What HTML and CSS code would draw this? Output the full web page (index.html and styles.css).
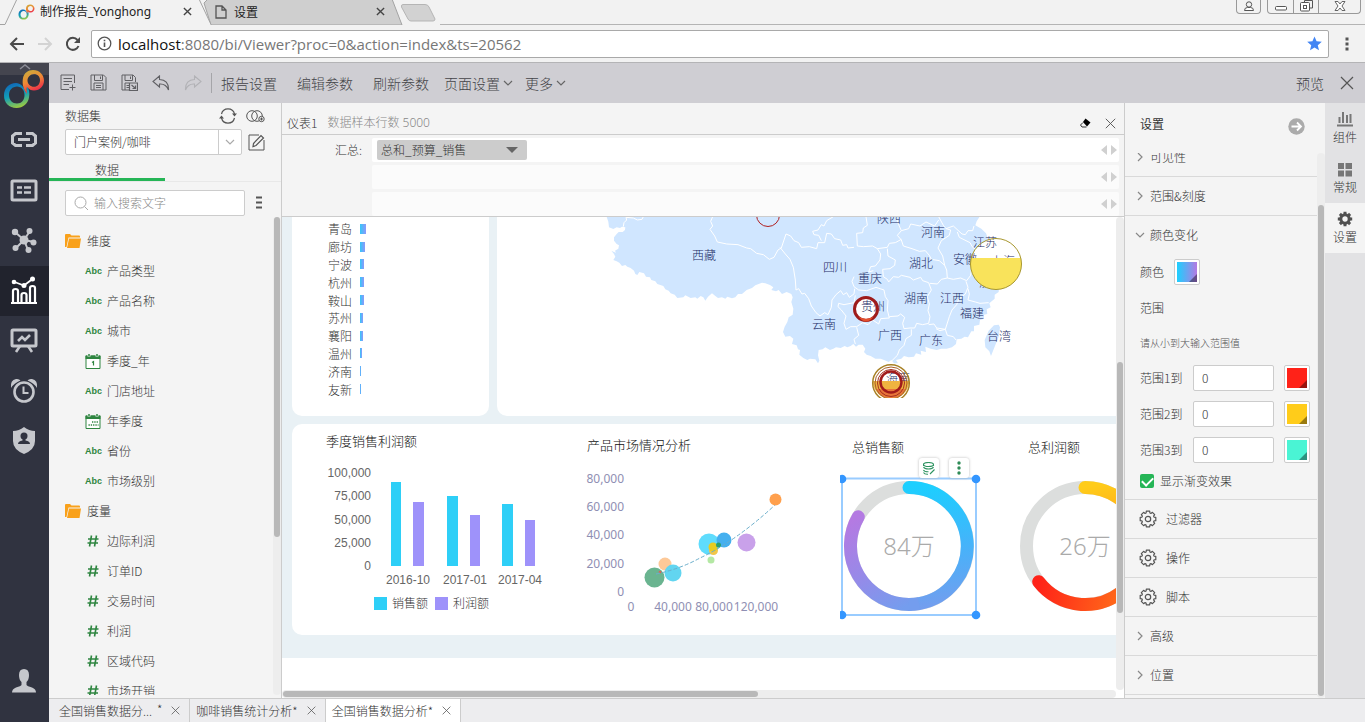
FILE: index.html
```html
<!DOCTYPE html>
<html lang="zh-CN">
<head>
<meta charset="utf-8">
<title>制作报告_Yonghong</title>
<link rel="stylesheet" href="styles.css">
</head>
<body>
<svg class="defs" width="0" height="0" aria-hidden="true">
  <defs>
    <linearGradient id="ring-cool" x1="0.3" y1="0" x2="0.6" y2="1"><stop offset="0" stop-color="#1068b8"/><stop offset="0.5" stop-color="#12a0b8"/><stop offset="1" stop-color="#a3cc3a"/></linearGradient>
    <linearGradient id="ring-warm" x1="0.2" y1="0" x2="0.6" y2="1"><stop offset="0" stop-color="#c9ac3c"/><stop offset="0.45" stop-color="#ef8a35"/><stop offset="1" stop-color="#ea1450"/></linearGradient>
    <symbol id="logo" viewBox="0 0 42 40">
      <path fill="url(#ring-cool)" fill-rule="evenodd" d="M13 14C6 14 1 19 1 26.500S6 39 13.500 39C20 39 25 34.500 26 28.500C27 24 26 19 23 15C24 20 23.500 22 22.500 23C21 17.500 17.500 14 13 14ZM14 17.500C18.500 17.500 21.500 21 21.500 26S18.500 34.500 14 34.500S6 31 6 26S9.500 17.500 14 17.500Z"/>
      <path fill="url(#ring-warm)" fill-rule="evenodd" d="M30 1C25 1 21 4 20 9C19 14 20 20 24 25C23.500 21 23.500 19 24 18C26 20.500 28 21.500 31 21.500C37 21.500 41 17 41 11.500S36.500 1 30 1ZM31 5C34.500 5 37 7.500 37 11.200S34.500 17.800 31 17.800S24.500 15 24.500 11.500S27.500 5 31 5Z"/>
    </symbol>
    <symbol id="cross" viewBox="0 0 14 14"><path d="M1 1L13 13M13 1L1 13" fill="none" stroke="currentColor" stroke-width="1.200"/></symbol>
    <symbol id="cross-bold" viewBox="0 0 10 10"><path d="M1 1L9 9M9 1L1 9" fill="none" stroke="currentColor" stroke-width="1.500"/></symbol>
    <symbol id="chev-down" viewBox="0 0 10 10"><path d="M1 3L5 7L9 3" fill="none" stroke="currentColor" stroke-width="1.200"/></symbol>
    <symbol id="chev-right" viewBox="0 0 10 10"><path d="M3 1L7 5L3 9" fill="none" stroke="currentColor" stroke-width="1.200"/></symbol>
    <symbol id="folder" viewBox="0 0 16 14"><path d="M0 13V1Q0 0 1 0H5L6.500 1.500H14Q15 1.500 15 2.500V3.500H3.500L1.500 13Z" fill="#f9a11b"/><path d="M4 4.500H16L14.500 14H2Z" fill="#f9a11b"/></symbol>
    <symbol id="hash" viewBox="0 0 12 12"><path d="M4.500 0.500L2.500 11.500M9.500 0.500L7.500 11.500M1 4H11.500M0.500 8H11" fill="none" stroke="#2e8540" stroke-width="1.600"/></symbol>
    <symbol id="cal-one" viewBox="0 0 15 15"><path d="M0.500 2H14.500V14.500H0.500Z" fill="#fff" stroke="#2e8540"/><path d="M0 1.500H15V5H0Z" fill="#2e8540"/><path d="M3.500 0V2.500M11.500 0V2.500" stroke="#f4f4f4" stroke-width="3"/><path d="M3.500 0V2M11.500 0V2" stroke="#2e8540" stroke-width="1.500"/><path d="M6.500 8.500L8 7.500V11.500" fill="none" stroke="#2e8540" stroke-width="1.200"/></symbol>
    <symbol id="cal-dots" viewBox="0 0 15 15"><path d="M0.500 2H14.500V14.500H0.500Z" fill="#fff" stroke="#2e8540"/><path d="M0 1.500H15V5H0Z" fill="#2e8540"/><path d="M3.500 0V2.500M11.500 0V2.500" stroke="#f4f4f4" stroke-width="3"/><path d="M3.500 0V2M11.500 0V2" stroke="#2e8540" stroke-width="1.500"/><path d="M6.500 8H13M3 11H13" stroke="#2e8540" stroke-width="1.500" stroke-dasharray="1.300 1"/></symbol>
    <symbol id="gear-line" viewBox="0 0 18 18"><path d="M7.300 1.200L10.700 1.200L10.900 3L11.900 3.400L13.400 2.300L15.700 4.600L14.600 6.100L15 7.100L16.800 7.300L16.800 10.700L15 10.900L14.600 11.900L15.700 13.400L13.400 15.700L11.900 14.600L10.900 15L10.700 16.800L7.300 16.800L7.100 15L6.100 14.600L4.600 15.700L2.300 13.400L3.400 11.900L3 10.900L1.200 10.700L1.200 7.300L3 7.100L3.400 6.100L2.300 4.600L4.600 2.300L6.100 3.400L7.100 3Z" fill="none" stroke="#555" stroke-width="1.200" stroke-linejoin="round"/><circle cx="9" cy="9" r="2.700" fill="none" stroke="#555" stroke-width="1.200"/></symbol>
    <symbol id="shift" viewBox="0 0 16 10"><path d="M6 0V10L0 5ZM10 0V10L16 5Z" fill="#d0d0d0"/></symbol>
  </defs>
</svg>

<header class="browser">
  <div class="tabstrip">
    <svg class="tabshapes" width="440" height="25" aria-hidden="true">
      <path d="M204 3L208 -1H392L402 25H211Z" fill="#cfcfcf" stroke="#a3a3a3"/>
      <path d="M0 24.500H5L17 -1H199L211 24.500" fill="#f2f2f2" stroke="#a3a3a3"/>
      <path d="M403 4.500H425Q428 4.500 429 7L435 19Q435 21 433 21H411Q409 21 408 19L401.500 7Q401 4.500 403 4.500Z" fill="#d2d2d2" stroke="#b5b5b5"/>
    </svg>
    <div class="tablabels">
      <div class="btab btab-first">
        <svg width="17" height="16"><use href="#logo"/></svg><span class="btab-name">制作报告_Yonghong</span>
        <button class="icon-btn" aria-label="关闭标签"><svg width="9" height="9"><use href="#cross-bold"/></svg></button>
      </div>
      <div class="btab">
        <svg width="12" height="14" viewBox="0 0 12 14"><path d="M1 1H7L11 5V13H1ZM7 1V5H11" fill="none" stroke="#555" stroke-width="1.300"/></svg><span class="btab-name">设置</span>
        <button class="icon-btn" aria-label="关闭标签"><svg width="9" height="9"><use href="#cross-bold"/></svg></button>
      </div>
    </div>
    <div class="window-controls">
      <button class="wbtn wbtn-user" aria-label="用户"><svg width="12" height="12" viewBox="0 0 12 12"><circle cx="6" cy="3.500" r="2.700" fill="none" stroke="#555"/><path d="M1.500 9.500Q1.500 6.500 4.500 6.500H7.500Q10.500 6.500 10.500 9.500Z" fill="#fff" stroke="#555"/></svg></button>
      <div class="wgroup">
        <button class="wbtn" aria-label="最小化"><svg width="12" height="12" viewBox="0 0 12 12"><rect x="0.500" y="5.500" width="11" height="3.500" rx="1" fill="#fff" stroke="#555"/></svg></button>
        <button class="wbtn" aria-label="还原"><svg width="13" height="13" viewBox="0 0 13 13"><path d="M4.500 3V0.500H12.500V8H10" fill="none" stroke="#555"/><rect x="0.500" y="2.500" width="9" height="8.500" rx="1" fill="#fff" stroke="#555"/><rect x="3.500" y="5.500" width="3" height="3" fill="none" stroke="#555"/></svg></button>
        <button class="wbtn wbtn-wide" aria-label="关闭"><svg width="12" height="12" viewBox="0 0 12 12"><path d="M1 0.500H4L6 3L8 0.500H11L8 5L11 9.500H8L6 7L4 9.500H1L4 5Z" fill="#fff" stroke="#666"/></svg></button>
      </div>
    </div>
  </div>
  <div class="addressbar">
    <button class="icon-btn" aria-label="后退"><svg width="16" height="16" viewBox="0 0 16 16"><path d="M15 8H2M8 2L2 8L8 14" fill="none" stroke="#4a4a4a" stroke-width="2"/></svg></button>
    <button class="icon-btn" aria-label="前进"><svg width="16" height="16" viewBox="0 0 16 16"><path d="M1 8H14M8 2L14 8L8 14" fill="none" stroke="#d3d3d3" stroke-width="2"/></svg></button>
    <button class="icon-btn" aria-label="刷新"><svg width="16" height="16" viewBox="0 0 16 16"><path d="M13.500 10A6 6 0 1 1 12.500 4" fill="none" stroke="#4a4a4a" stroke-width="2"/><path d="M15 1V7H9Z" fill="#4a4a4a"/></svg></button>
    <div class="urlbox">
      <svg width="15" height="15" viewBox="0 0 15 15"><circle cx="7.500" cy="7.500" r="6.300" fill="none" stroke="#555" stroke-width="1.300"/><path d="M7.500 6.500V11M7.500 3.700V5.200" stroke="#555" stroke-width="1.600"/></svg>
      <span class="url"><span class="host">localhost</span>:8080/bi/Viewer?proc=0&amp;action=index&amp;ts=20562</span>
      <svg width="15" height="15" viewBox="0 0 16 16"><path d="M8 0.500L10.200 5.600L15.800 6.100L11.500 9.800L12.800 15.300L8 12.300L3.200 15.300L4.500 9.800L0.200 6.100L5.800 5.600Z" fill="#4285f4"/></svg>
    </div>
    <button class="icon-btn menu-btn" aria-label="菜单"><svg width="4" height="14" viewBox="0 0 4 14"><path d="M2 0.500V3.500M2 5.500V8.500M2 10.500V13.500" stroke="#555" stroke-width="3"/></svg></button>
  </div>
</header>

<div class="app">
  <nav class="rail" aria-label="主导航">
    <div class="rail-top"><svg width="12" height="7" viewBox="0 0 12 7"><path d="M1 6L6 2L11 6" fill="none" stroke="#8b8c96" stroke-width="1.500"/></svg></div>
    <svg class="brand" width="42" height="40"><use href="#logo"/></svg>
    <button class="rail-item" aria-label="连接"><svg width="28" height="28" viewBox="0 0 28 28"><path d="M12 6.500H5.500L2.500 9V16L5.500 18.500H12M16 6.500H22.500L25.500 9V16L22.500 18.500H16M8 12.500H20" fill="none" stroke="#c5c7cc" stroke-width="3"/></svg></button>
    <button class="rail-item" aria-label="数据集"><svg width="28" height="28" viewBox="0 0 28 28"><rect x="2" y="4" width="24" height="19" rx="1" fill="none" stroke="#c5c7cc" stroke-width="3"/><path d="M7 10.500H12M7 15.500H12M14 10.500H21M14 15.500H21" stroke="#c5c7cc" stroke-width="2.500"/></svg></button>
    <button class="rail-item" aria-label="分析"><svg width="28" height="28" viewBox="0 0 28 28"><path d="M14 13L5 5M14 13L20 4M14 13L24 15M14 13L6 21M14 13L18 23" stroke="#c5c7cc" stroke-width="2"/><circle cx="14" cy="13" r="4.500" fill="#c5c7cc"/><g fill="#c5c7cc"><circle cx="5" cy="5" r="3.200"/><circle cx="19.500" cy="4" r="3"/><circle cx="23.500" cy="15.500" r="3"/><circle cx="5.500" cy="21" r="3"/><circle cx="18.500" cy="23" r="3"/></g></svg></button>
    <button class="rail-item rail-active" aria-label="制作报告"><svg width="28" height="30" viewBox="0 0 28 30"><path d="M1 27H27" stroke="#fff" stroke-width="2"/><path d="M3 27V15Q3 13 5.500 13T8 15V27M11.500 27V19Q11.500 17 14 17T16.500 19V27M20 27V12Q20 10 22.500 10T25 12V27" fill="none" stroke="#fff" stroke-width="2.200"/><path d="M4.500 6L14 9.500L22.500 3" fill="none" stroke="#fff" stroke-width="1.800"/><circle cx="4" cy="6" r="2.300" fill="#fff"/><circle cx="14" cy="9.500" r="2.500" fill="#fff"/><circle cx="22.500" cy="3" r="2.500" fill="#fff"/></svg></button>
    <button class="rail-item" aria-label="查看报告"><svg width="28" height="28" viewBox="0 0 28 28"><rect x="2" y="3" width="24" height="16" rx="1" fill="none" stroke="#c5c7cc" stroke-width="3"/><path d="M8 14L12 10L15 13L20 8M10 19L6 25M18 19L22 25" fill="none" stroke="#c5c7cc" stroke-width="2.600"/></svg></button>
    <button class="rail-item" aria-label="调度"><svg width="28" height="28" viewBox="0 0 28 28"><circle cx="14" cy="15" r="9.500" fill="none" stroke="#c5c7cc" stroke-width="2.600"/><path d="M13.500 9.500V16H18.500" fill="none" stroke="#c5c7cc" stroke-width="2"/><path d="M1 11Q0 3 6 2Q9 1.500 10.500 3.500Q4 6 1 11ZM27 11Q28 3 22 2Q19 1.500 17.500 3.500Q24 6 27 11Z" fill="#c5c7cc"/></svg></button>
    <button class="rail-item" aria-label="管理"><svg width="28" height="28" viewBox="0 0 28 28"><path d="M14 0Q19 4 25 4V14Q25 22.500 14 27Q3 22.500 3 14V4Q9 4 14 0Z" fill="#c5c7cc"/><circle cx="14" cy="9" r="3.500" fill="#303340"/><path d="M12.500 10.500H15.500V13.500Q20 14 20 17H8Q8 14 12.500 13.500Z" fill="#303340"/></svg></button>
    <button class="rail-item rail-user" aria-label="个人"><svg width="26" height="26" viewBox="0 0 26 26"><path d="M13 1Q18 1 18 7Q18 12 15.500 14V17Q16 18 21 19.500Q25 21 25 24.500H1Q1 21 5 19.500Q10 18 10.500 17V14Q8 12 8 7Q8 1 13 1Z" fill="#c5c7cc"/></svg></button>
  </nav>

  <div class="main">
    <div class="toolbar">
      <button class="icon-btn" aria-label="新建"><svg width="16" height="17" viewBox="0 0 16 17"><path d="M14.500 9V1H1V15.500H9M3.500 4.500H12M3.500 7.500H12M3.500 10.500H9M12.500 10.500V16.500M9.500 13.500H15.500" fill="none" stroke="#606064"/></svg></button>
      <button class="icon-btn" aria-label="保存"><svg width="17" height="17" viewBox="0 0 17 17"><path d="M1 1H13.500L16 3.500V16H1ZM4.500 1V6.500H12.500V1M10.500 2.500V5M4 16V9H13V16M6 11.500H11M6 13.500H11" fill="none" stroke="#606064"/></svg></button>
      <button class="icon-btn" aria-label="另存为"><svg width="17" height="17" viewBox="0 0 17 17"><path d="M8 16H1V1H12L14.500 3.500V8M4 1V6.500H11.500V1M9.500 2.500V5M4 16V9H8M5.500 11.500H8M5.500 13.500H8" fill="none" stroke="#606064"/><path d="M8.500 9H16.500V16.500H8.500ZM10.500 11L14 14M14.500 11.500V14.500H11.500" fill="none" stroke="#606064" stroke-width="1.200"/></svg></button>
      <button class="icon-btn" aria-label="撤销"><svg width="18" height="16" viewBox="0 0 18 16"><path d="M7.500 1L1 6.500L7.500 12V9Q14 8.500 16.500 15Q17 5 7.500 4.500Z" fill="none" stroke="#606064" stroke-width="1.100"/></svg></button>
      <button class="icon-btn" aria-label="重做"><svg width="18" height="16" viewBox="0 0 18 16"><path d="M10.500 1L17 6.500L10.500 12V9Q4 8.500 1.500 15Q1 5 10.500 4.500Z" fill="none" stroke="#b2b2b6" stroke-width="1.100"/></svg></button>
      <span class="divider"></span>
      <button class="tool">报告设置</button>
      <button class="tool">编辑参数</button>
      <button class="tool">刷新参数</button>
      <button class="tool tool-menu">页面设置<svg width="10" height="10"><use href="#chev-down"/></svg></button>
      <button class="tool tool-menu">更多<svg width="10" height="10"><use href="#chev-down"/></svg></button>
      <span class="spacer"></span>
      <button class="tool tool-preview">预览</button>
      <button class="icon-btn" aria-label="关闭"><svg width="14" height="14"><use href="#cross"/></svg></button>
    </div>

    <div class="workspace">
      <aside class="dataset">
        <div class="ds-head">
          <label for="ds">数据集</label>
          <button class="icon-btn" aria-label="刷新数据集"><svg width="18" height="16" viewBox="0 0 18 16"><path d="M2.500 6A6.700 6.700 0 0 1 15.500 6M15.500 10A6.700 6.700 0 0 1 2.500 10" fill="none" stroke="#555" stroke-width="1.200"/><path d="M13 5.500H18L15.500 8.500ZM0 10.500H5L2.500 7.500Z" fill="#555"/></svg></button>
          <button class="icon-btn" aria-label="关联数据集"><svg width="19" height="14" viewBox="0 0 19 14"><circle cx="6" cy="7" r="5.300" fill="none" stroke="#555"/><circle cx="11" cy="7" r="5.300" fill="none" stroke="#555"/><circle cx="15.500" cy="10" r="2.700" fill="#f4f4f4" stroke="#555"/><path d="M15.500 8.500V11.500M14 10H17" stroke="#555"/></svg></button>
        </div>
        <div class="ds-pick">
          <div class="combo"><select id="ds"><option>门户案例/咖啡</option></select><svg width="23" height="24" viewBox="0 0 23 24"><path d="M0.500 0V24" stroke="#ccc"/><path d="M8 10L12 14L16 10" fill="none" stroke="#aaa" stroke-width="1.200"/></svg></div>
          <button class="icon-btn" aria-label="编辑"><svg width="17" height="17" viewBox="0 0 17 17"><path d="M16 6V16H1V1H11" fill="none" stroke="#555"/><path d="M5.500 9.500L13 1.500L15.500 4L8 11.500L5 12.500Z" fill="none" stroke="#555" stroke-width="1.200"/></svg></button>
        </div>
        <div class="ds-tabs"><button class="ds-tab">数据</button></div>
        <div class="ds-search">
          <div class="search"><svg width="15" height="15" viewBox="0 0 15 15"><circle cx="6.500" cy="6.500" r="5.500" fill="none" stroke="#aaa"/><path d="M10.500 10.500L14 14" stroke="#aaa"/></svg><input type="text" aria-label="输入搜索文字" placeholder="输入搜索文字"></div>
          <button class="icon-btn" aria-label="更多"><svg width="8" height="14" viewBox="0 0 8 14"><path d="M1 1.500H7M1 6.500H7M1 11.500H7" stroke="#555" stroke-width="2.200"/></svg></button>
        </div>
        <div class="tree-wrap">
          <ul class="tree">
            <li class="group"><svg width="16" height="14"><use href="#folder"/></svg>维度</li>
            <li><span class="abc">Abc</span>产品类型</li>
            <li><span class="abc">Abc</span>产品名称</li>
            <li><span class="abc">Abc</span>城市</li>
            <li><svg width="16" height="15"><use href="#cal-one"/></svg>季度_年</li>
            <li><span class="abc">Abc</span>门店地址</li>
            <li><svg width="16" height="15"><use href="#cal-dots"/></svg>年季度</li>
            <li><span class="abc">Abc</span>省份</li>
            <li><span class="abc">Abc</span>市场级别</li>
            <li class="group"><svg width="16" height="14"><use href="#folder"/></svg>度量</li>
            <li><svg width="16" height="12"><use href="#hash"/></svg>边际利润</li>
            <li><svg width="16" height="12"><use href="#hash"/></svg>订单ID</li>
            <li><svg width="16" height="12"><use href="#hash"/></svg>交易时间</li>
            <li><svg width="16" height="12"><use href="#hash"/></svg>利润</li>
            <li><svg width="16" height="12"><use href="#hash"/></svg>区域代码</li>
            <li><svg width="16" height="12"><use href="#hash"/></svg>市场开销</li>
          </ul>
          <div class="vbar"><div class="thumb thumb-tree"></div></div>
        </div>
      </aside>

      <main class="editor">
        <div class="ed-head">
          <span class="ed-title">仪表1</span><span class="ed-sub">数据样本行数 5000</span><span class="spacer"></span>
          <button class="icon-btn" aria-label="清除"><svg width="11" height="10" viewBox="0 0 11 10"><path d="M5.500 0.500L10.500 4.500L7 8.500L3 4Z" fill="#000"/><path d="M3 4.500L0.500 7L2 9H6.500" fill="none" stroke="#333"/></svg></button>
          <button class="icon-btn" aria-label="关闭"><svg width="11" height="11"><use href="#cross"/></svg></button>
        </div>
        <div class="binding">
          <label class="bind-label" for="measure">汇总:</label>
          <div class="shelves">
            <div class="shelf shelf-on"><div class="pill"><select id="measure"><option>总和_预算_销售</option></select><svg width="12" height="6" viewBox="0 0 12 6"><path d="M0 0H12L6 6Z" fill="#666"/></svg></div><svg width="16" height="10"><use href="#shift"/></svg></div>
            <div class="shelf"><svg width="16" height="10"><use href="#shift"/></svg></div>
            <div class="shelf"><svg width="16" height="10"><use href="#shift"/></svg></div>
          </div>
        </div>
        <div class="stage">
          <div class="viewport">
            <div class="board">
              <div class="board-row">
                <section class="card card-cities">
                  <ul class="cities">
                    <li>青岛<i style="width:6px"></i></li>
                    <li>廊坊<i style="width:5px"></i></li>
                    <li>宁波<i style="width:4px"></i></li>
                    <li>杭州<i style="width:4px"></i></li>
                    <li>鞍山<i style="width:4px"></i></li>
                    <li>苏州<i style="width:3px"></i></li>
                    <li>襄阳<i style="width:3px"></i></li>
                    <li>温州<i style="width:2px"></i></li>
                    <li>济南<i style="width:1px"></i></li>
                    <li>友新<i style="width:1px"></i></li>
                  </ul>
                </section>
                <section class="card card-map">
                  <svg width="619" height="181" viewBox="497 217 619 181" role="img" aria-label="销售地图">
                    <g transform="translate(600 210) scale(0.33333)">
                      <path fill="#d0e6ff" d="M18 15L25 35L27 52L40 57L50 52L60 54L66 50L76 52L75 60L68 66L56 66L50 72L42 82L42 92L50 102L57 106L55 116L45 122L48 128L42 126L34 122L42 132L46 140L40 150L50 154L58 158L66 168L76 165L82 170L92 174L102 182L106 192L112 195L118 186L132 190L138 200L150 202L154 210L166 214L172 222L190 228L196 238L206 242L212 250L224 254L232 264L250 262L256 256L272 264L286 262L292 266L302 258L310 262L316 272L324 260L336 250L346 258L354 264L366 262L376 266L382 260L396 265L406 262L414 252L426 252L440 240L456 234L466 226L486 218L496 220L510 225L520 232L514 240L528 244L536 240L546 252L560 246L574 252L578 262L574 276L580 296L578 314L566 322L562 336L554 350L549 366L556 380L570 378L580 386L576 402L590 406L594 418L600 420L598 434L610 444L622 450L630 446L646 448L654 460L658 452L654 436L656 420L668 418L676 412L690 420L700 416L708 412L722 414L734 408L742 412L752 408L760 402L768 410L776 404L788 404L796 416L792 426L800 434L812 438L826 446L842 446L852 450L866 456L874 450L882 460L894 460L888 450L904 446L912 438L926 442L942 440L948 430L964 434L962 422L978 426L976 410L992 416L1010 420L1024 416L1040 416L1056 412L1068 402L1070 388L1084 386L1094 380L1104 382L1114 364L1122 364L1122 348L1138 344L1140 330L1152 326L1152 314L1162 312L1160 298L1172 292L1168 280L1184 266L1184 254L1196 246L1200 200L1190 160L1196 132L1184 104L1164 86L1158 70L1144 56L1126 46L1130 34L1142 15Z"/>
                      <path fill="#d0e6ff" d="M1196 344L1200 352L1196 380L1184 410L1173 438L1168 424L1156 412L1154 390L1166 362L1182 346Z"/>
                      <g fill="none" stroke="#fff" stroke-width="3" stroke-linejoin="round">
                        <path d="M70 50L72 38L80 30L78 22L100 24L112 30L126 28L130 20M338 20L332 34L338 48L330 58L344 78L352 96L380 102L414 104L440 114L452 116L470 130L490 134L508 148L522 142L534 120L544 114L552 90L558 72L572 78L582 92L596 98L604 112L628 110L650 116L654 98L674 98L680 70L694 72L704 86L722 90L728 106L740 104L744 114L762 112"/>
                        <path d="M540 112L556 132L570 148L580 172L586 210L588 240L596 236L606 252L614 250L626 266L634 288L648 308L660 318L674 308L684 314L694 292L696 270L708 254L722 242L730 254L740 248L748 262L762 252L764 236"/>
                        <path d="M700 20L680 32L672 48L664 44L654 60L638 64L642 74L656 76L664 92M798 20L802 46L790 54L788 68L770 70L772 108L790 110L818 108L832 116L862 112L868 100L886 98L904 88"/>
                        <path d="M832 116L842 132L840 150L826 168L812 170L806 186L820 182M862 116L864 138L886 150L884 166L870 176L848 178L850 200L862 208L866 216"/>
                        <path d="M762 200L756 214L762 230L776 240L800 242L828 232L852 240L856 260L864 272L862 300L868 324L842 326L836 342L818 330L804 344L788 338L770 350L752 350L738 358L732 340L738 318L724 300L714 290L716 280L732 284L762 278L766 256"/>
                        <path d="M866 216L880 200L896 202L904 196L930 202L940 210L962 202L968 212L986 218L994 240L982 260L988 282L984 302L990 320L986 340L968 344L950 340L944 354L930 354L912 356L908 340L914 322L902 312L894 318L868 320"/>
                        <path d="M888 20L896 44L904 62L892 76L904 90L910 108L936 116L958 124L976 122L988 136L994 148L1018 152L1034 166L1040 180L1042 204L1024 208L1012 222L990 220M1042 204L1060 208L1082 204L1100 212L1112 196L1116 170"/>
                        <path d="M770 352L776 376L762 388L766 402M934 358L934 376L918 386L912 406L898 420L892 436L876 452M986 344L1002 342L1010 354L1036 358L1048 320L1056 300L1070 284L1076 268L1096 252L1104 232L1098 214M1008 356L1020 362L1036 358L1042 376L1060 380L1068 390M1104 236L1108 252L1104 270L1126 276L1140 280L1166 278"/>
                        <path d="M1016 20L1030 46L1038 56L1052 60L1048 76L1024 92L1014 114L1028 138L1034 166M1038 56L1060 48L1086 72L1096 74L1104 62L1118 62L1122 48M904 62L926 56L932 42L960 48L978 36L1004 48L1016 30M1072 66L1078 82L1110 98L1118 112L1140 126"/>
                      </g>
                      <circle cx="1188" cy="162" r="75" fill="#fff"/>
                      <circle cx="873" cy="518" r="55" fill="#fff"/>
                      <circle cx="797" cy="297" r="34" fill="#fff"/>
                    </g>
                    <g class="map-text">
                      <text x="692" y="260">西藏</text><text x="823" y="272">四川</text><text x="858" y="283">重庆</text><text x="877" y="223">陕西</text><text x="921" y="237">河南</text><text x="909" y="268">湖北</text><text x="953" y="264">安徽</text><text x="973" y="247">江苏</text><text x="991" y="266">上海</text><text x="979" y="287">浙江</text><text x="904" y="303">湖南</text><text x="940" y="303">江西</text><text x="960" y="318">福建</text><text x="861" y="311">贵州</text><text x="812" y="329">云南</text><text x="878" y="340">广西</text><text x="919" y="345">广东</text><text x="987" y="341">台湾</text><text x="886" y="383">海南</text>
                    </g>
                    <path d="M971.200 258H1020.800A25.500 25.500 0 1 1 971.200 258Z" fill="#f9e35b"/>
                    <circle cx="996" cy="264" r="25.500" fill="none" stroke="#a8972f"/>
                    <circle cx="768" cy="215" r="11.500" fill="none" stroke="#b02020"/>
                    <circle cx="866" cy="309" r="11.500" fill="none" stroke="#9e1c1c" stroke-width="3"/>
                    <path d="M858.500 316.500Q866 321 873.500 316.500Q870 321.500 866 321.500T858.500 316.500Z" fill="#e4512f"/>
                    <path d="M873 381H909A18 18 0 0 1 873 381Z" fill="#efb440"/>
                    <path d="M876 389H906A17 17 0 0 1 876 389Z" fill="#e8753a"/>
                    <g fill="none"><circle cx="891" cy="383" r="18.300" stroke="#a88125" stroke-width="1.500"/><circle cx="891" cy="383" r="16" stroke="#a8602a"/><circle cx="891" cy="383" r="13.500" stroke="#a33020"/><circle cx="891" cy="382" r="10.500" stroke="#a11b1b" stroke-width="2.500"/></g>
                  </svg>
                </section>
              </div>
              <section class="card card-charts">
                <figure class="fig fig-bars">
                  <figcaption>季度销售利润额</figcaption>
                  <svg width="283" height="164" viewBox="292 450 283 164" role="img" aria-label="季度销售利润额">
                    <g class="axis" text-anchor="end"><text x="371" y="477">100,000</text><text x="371" y="500">75,000</text><text x="371" y="524">50,000</text><text x="371" y="547">25,000</text><text x="371" y="570">0</text></g>
                    <path fill="#2ecff7" d="M391 482H401V566H391ZM447 496H458V566H447ZM502 504H513V566H502ZM374 597H387V610H374Z"/>
                    <path fill="#9e92fa" d="M413 502H424V566H413ZM470 515H480V566H470ZM525 520H535V566H525ZM435 597H448V610H435Z"/>
                    <g class="axis" text-anchor="middle"><text x="408" y="584">2016-10</text><text x="465" y="584">2017-01</text><text x="520" y="584">2017-04</text></g>
                    <g class="legend"><text x="392" y="608">销售额</text><text x="453" y="608">利润额</text></g>
                  </svg>
                </figure>
                <figure class="fig fig-scatter">
                  <figcaption>产品市场情况分析</figcaption>
                  <svg width="265" height="164" viewBox="575 454 265 164" role="img" aria-label="产品市场情况分析">
                    <g class="axis axis-soft" text-anchor="end"><text x="624" y="483">80,000</text><text x="624" y="511">60,000</text><text x="624" y="539">40,000</text><text x="624" y="568">20,000</text><text x="624" y="596">0</text></g>
                    <g class="axis axis-soft" text-anchor="middle"><text x="631" y="611">0</text><text x="673" y="611">40,000</text><text x="714" y="611">80,000</text><text x="756" y="611">120,000</text></g>
                    <circle cx="665" cy="564" r="6.500" fill="#fdc998"/><circle cx="654.500" cy="577.500" r="10" fill="#6ab490"/><circle cx="673" cy="573" r="8.500" fill="#62d5f0"/><circle cx="660" cy="572" r="1.300" fill="#d9625a"/>
                    <circle cx="709" cy="544" r="10.500" fill="#5fdcfd"/><circle cx="713.500" cy="550.500" r="4.500" fill="#f1c64a"/><circle cx="713" cy="547" r="4.500" fill="#e8cc20"/><circle cx="724" cy="540" r="7.500" fill="#45b0ef"/><circle cx="718.500" cy="545" r="2.500" fill="#2aa070"/><circle cx="711" cy="560" r="3.500" fill="#b4e8a4"/><circle cx="746.500" cy="542.500" r="9" fill="#c9a1ea"/><circle cx="775.500" cy="499.500" r="6" fill="#ffa04d"/>
                    <path d="M656 574Q680 569 700 558Q736 541 775 505" fill="none" stroke="#6aaecb" stroke-dasharray="4 2"/>
                  </svg>
                </figure>
                <figure class="fig fig-gauge">
                  <figcaption>总销售额</figcaption>
                  <svg width="176" height="164" viewBox="840 456 176 164" role="img" aria-label="总销售额 84万">
                    <defs>
                      <linearGradient id="g1" gradientUnits="userSpaceOnUse" x1="900" y1="487" x2="909" y2="611"><stop offset="0" stop-color="#1ccfff"/><stop offset="0.500" stop-color="#45b3fa"/><stop offset="1" stop-color="#749dee"/></linearGradient>
                      <linearGradient id="g2" gradientUnits="userSpaceOnUse" x1="909" y1="605" x2="858" y2="517"><stop offset="0" stop-color="#749dee"/><stop offset="0.500" stop-color="#9889e8"/><stop offset="1" stop-color="#b47ae2"/></linearGradient>
                    </defs>
                    <circle cx="909" cy="546" r="58.500" fill="none" stroke="#dcdedd" stroke-width="13"/>
                    <g fill="none" stroke-width="13" stroke-linecap="round"><path d="M909 604.500A58.500 58.500 0 0 1 858.300 516.800" stroke="url(#g2)"/><path d="M909 487.500A58.500 58.500 0 0 1 919 603.600" stroke="url(#g1)"/><path d="M919 603.600A58.500 58.500 0 0 1 909 604.500" stroke="#749dee" stroke-linecap="butt"/></g>
                    <text class="gauge-value" x="909" y="555" text-anchor="middle">84万</text>
                    <rect x="842" y="478.500" width="134" height="136.500" fill="none" stroke="#99ccff" stroke-width="2"/>
                    <g fill="#3396ff"><circle cx="842" cy="479" r="4.300"/><circle cx="976" cy="479" r="4.300"/><circle cx="842" cy="615" r="4.300"/><circle cx="976" cy="615" r="4.300"/></g>
                  </svg>
                  <div class="quick">
                    <button aria-label="数据"><svg width="12" height="13" viewBox="0 0 12 13"><g fill="none" stroke="#2e9461" stroke-width="1.100"><ellipse cx="5.500" cy="2.500" rx="5" ry="2"/><path d="M0.500 5Q1.500 7 5.500 7T10.500 5M0.500 8Q1.500 10 5.500 9.800M0.500 2.500V4M10.500 2.500V4M0.500 10.500Q1.500 12.500 5 12.300M7 12L11.500 7.500"/></g></svg></button>
                    <button aria-label="更多操作"><svg width="4" height="14" viewBox="0 0 4 14"><g fill="#2e8b57"><circle cx="2" cy="2" r="1.700"/><circle cx="2" cy="7" r="1.700"/><circle cx="2" cy="12" r="1.700"/></g></svg></button>
                  </div>
                </figure>
                <figure class="fig fig-gauge">
                  <figcaption>总利润额</figcaption>
                  <svg width="176" height="164" viewBox="1016 456 176 164" role="img" aria-label="总利润额 26万">
                    <defs>
                      <linearGradient id="g3" gradientUnits="userSpaceOnUse" x1="1085" y1="487" x2="1110" y2="605"><stop offset="0" stop-color="#ffcc1a"/><stop offset="1" stop-color="#ff6a1a"/></linearGradient>
                      <linearGradient id="g4" gradientUnits="userSpaceOnUse" x1="1120" y1="600" x2="1038" y2="582"><stop offset="0" stop-color="#ff6a1a"/><stop offset="1" stop-color="#ff2218"/></linearGradient>
                    </defs>
                    <circle cx="1085" cy="546" r="58.500" fill="none" stroke="#dcdedd" stroke-width="13"/>
                    <g fill="none" stroke-width="13" stroke-linecap="round"><path d="M1085 487.500A58.500 58.500 0 0 1 1126.400 587.400" stroke="url(#g3)"/><path d="M1126.400 587.400A58.500 58.500 0 0 1 1038.700 581.700" stroke="url(#g4)"/></g>
                    <text class="gauge-value" x="1085" y="555" text-anchor="middle">26万</text>
                  </svg>
                </figure>
              </section>
            </div>
          </div>
          <div class="vbar"><div class="thumb thumb-stage"></div></div>
          <div class="hbar"><div class="thumb thumb-wide"></div></div>
        </div>
      </main>

      <aside class="settings">
        <div class="set-head"><h2>设置</h2><button class="icon-btn" aria-label="收起"><svg width="17" height="17" viewBox="0 0 17 17"><circle cx="8.500" cy="8.500" r="8.200" fill="#ababab"/><path d="M3.500 8.500H13M9 4.500L13 8.500L9 12.500" fill="none" stroke="#fff" stroke-width="1.800"/></svg></button></div>
        <div class="set-wrap">
          <div class="set-list">
            <div class="scrolled">
              <button class="sec"><svg width="10" height="10"><use href="#chev-right"/></svg>可见性</button>
              <button class="sec"><svg width="10" height="10"><use href="#chev-right"/></svg>范围&amp;刻度</button>
              <div class="sec-open">
                <button class="sec sec-title"><svg width="10" height="10"><use href="#chev-down"/></svg>颜色变化</button>
                <div class="field"><span>颜色</span><button class="swatch swatch-mix" aria-label="颜色"><i></i></button></div>
                <div class="field">范围</div>
                <p class="hint">请从小到大输入范围值</p>
                <div class="field"><label for="r1">范围1到</label><input id="r1" type="text" value="0"><button class="swatch swatch-red" aria-label="范围1颜色"><i></i></button></div>
                <div class="field"><label for="r2">范围2到</label><input id="r2" type="text" value="0"><button class="swatch swatch-yellow" aria-label="范围2颜色"><i></i></button></div>
                <div class="field"><label for="r3">范围3到</label><input id="r3" type="text" value="0"><button class="swatch swatch-mint" aria-label="范围3颜色"><i></i></button></div>
                <label class="check"><input type="checkbox" checked>显示渐变效果</label>
              </div>
              <button class="sec sec-gear"><svg width="18" height="18"><use href="#gear-line"/></svg>过滤器</button>
              <button class="sec sec-gear"><svg width="18" height="18"><use href="#gear-line"/></svg>操作</button>
              <button class="sec sec-gear"><svg width="18" height="18"><use href="#gear-line"/></svg>脚本</button>
              <button class="sec"><svg width="10" height="10"><use href="#chev-right"/></svg>高级</button>
              <button class="sec"><svg width="10" height="10"><use href="#chev-right"/></svg>位置</button>
            </div>
          </div>
          <div class="vbar"><div class="thumb thumb-settings"></div></div>
        </div>
      </aside>

      <nav class="side" aria-label="面板">
        <button class="side-item"><svg width="16" height="16" viewBox="0 0 16 16"><path d="M0 14.500H16" stroke="#777" stroke-width="2"/><path d="M2.500 12V6M6 12V1M10 12V4M13.500 12V3" stroke="#777" stroke-width="2"/></svg>组件</button>
        <button class="side-item"><svg width="14" height="16" viewBox="0 0 14 16"><path d="M0 2H6V8H0ZM7.500 2H14V8H7.500ZM0 9.500H6V15.500H0ZM7.500 9.500H14V15.500H7.500Z" fill="#777"/></svg>常规</button>
        <button class="side-item side-active"><svg width="16" height="16" viewBox="0 0 16 16"><circle cx="8" cy="8" r="4.200" fill="none" stroke="#505050" stroke-width="3"/><g stroke="#505050" stroke-width="3"><path d="M8 0.800V3M8 13V15.200M0.800 8H3M13 8H15.200M2.900 2.900L4.500 4.500M11.500 11.500L13.100 13.100M2.900 13.100L4.500 11.500M11.500 4.500L13.100 2.900"/></g></svg>设置</button>
      </nav>
    </div>

    <footer class="sheets">
      <div class="sheet"><span>全国销售数据分...</span><span class="star">*</span><button class="icon-btn" aria-label="关闭"><svg width="9" height="9"><use href="#cross"/></svg></button></div>
      <div class="sheet"><span>咖啡销售统计分析*</span><button class="icon-btn" aria-label="关闭"><svg width="9" height="9"><use href="#cross"/></svg></button></div>
      <div class="sheet sheet-on"><span>全国销售数据分析*</span><button class="icon-btn" aria-label="关闭"><svg width="9" height="9"><use href="#cross"/></svg></button></div>
    </footer>
  </div>
</div>
</body>
</html>
```

FILE: styles.css
```css
* { box-sizing: border-box; }
body {
  margin: 0; height: 100vh; display: flex; flex-direction: column; overflow: hidden;
  font: 300 12px/18px "Noto Sans CJK SC", "Noto Sans", sans-serif; color: #333; background: #f2f2f2;
}
button, input, select { font: inherit; color: inherit; margin: 0; padding: 0; border: 0; background: none; }
svg { display: block; flex: none; }
ul { list-style: none; margin: 0; padding: 0; }
.defs { position: absolute; }
.icon-btn { display: flex; align-items: center; justify-content: center; color: #555; flex: none; }
.spacer { flex: 1; }

/* browser frame */
.browser { flex: none; border-bottom: 1px solid #b4b4b6; }
.tabstrip { display: grid; grid-template-columns: 440px 1fr; height: 25px; }
.tabshapes, .tablabels { grid-area: 1 / 1; }
.tablabels { display: flex; color: #222; font-weight: 400; padding-bottom: 2px; }
.btab { display: flex; align-items: center; width: 190px; gap: 7px; padding-left: 3px; }
.btab-first { width: 212px; gap: 5px; padding-left: 18px; font-family: "Noto Sans", "Noto Sans CJK SC", sans-serif; }
.btab-name { flex: 1; }
.btab-first .icon-btn { margin-right: 20px; }
.btab .icon-btn { color: #444; }
.btab:not(.btab-first) .icon-btn { margin-right: 17px; }
.window-controls { grid-area: 1 / 2; display: flex; justify-content: flex-end; align-items: flex-start; gap: 6px; padding-right: 4px; border-bottom: 1px solid #b4b4b4; }
.wbtn { width: 25px; height: 13px; display: flex; align-items: center; justify-content: center; overflow: hidden; }
.wbtn-user { border: 1px solid #999; border-top: 0; border-radius: 0 0 4px 4px; height: 14px; }
.wgroup { display: flex; border: 1px solid #999; border-top: 0; border-radius: 0 0 4px 4px; }
.wgroup .wbtn + .wbtn { border-left: 1px solid #999; }
.wbtn-wide { width: 42px; }
.addressbar { display: flex; align-items: center; gap: 12px; height: 37px; padding: 0 16px 0 9px; }
.urlbox { flex: 1; display: flex; align-items: center; height: 28px; margin-left: -2px; padding: 0 6px 0 5px; gap: 6px; background: #fff; border: 1px solid #a9a9a9; border-radius: 2px; }
.menu-btn { margin-left: 4px; }
.url { flex: 1; font: 400 15px/20px "Open Sans", "Noto Sans", sans-serif; color: #777; }
.host { color: #111; }

/* application shell */
.app { flex: 1; display: flex; min-height: 0; }
.rail { width: 49px; flex: none; background: #303340; display: flex; flex-direction: column; align-items: stretch; }
.rail-top { height: 12px; background: #44454f; display: flex; justify-content: center; }
.brand { margin: -6px 0 7px 3px; }
.rail-item { height: 50px; flex: none; display: flex; align-items: center; justify-content: center; padding-right: 1px; }
.rail-active { background: #21232d; }
.rail-user { margin-top: auto; margin-bottom: 16px; }
.main { flex: 1; display: flex; flex-direction: column; min-width: 0; }

.toolbar { flex: none; height: 40px; display: flex; align-items: center; background: #cfced3; padding: 0 11px 1px 11px; gap: 14px; font-size: 14px; color: #444448; }
.divider { width: 1px; height: 20px; background: #a5a5a9; margin-left: -5px; margin-right: -1px; }
.tool { line-height: 20px; margin-right: 6px; }
.tool:nth-of-type(6) { margin-left: -4px; }
.tool-menu { display: flex; align-items: center; gap: 3px; margin: 0 -2px 0 0; }
.tool-menu:nth-of-type(9) { margin-left: -5px; }
.tool-menu svg { color: #666; margin-top: 1px; }
.tool-preview { margin-right: 2px; }

.workspace { flex: 1; display: flex; min-height: 0; }

/* data set panel */
.dataset { width: 232px; flex: none; background: #f4f4f4; display: flex; flex-direction: column; }
.ds-head { display: flex; align-items: center; gap: 9px; height: 26px; padding: 0 16px 0 16px; }
.ds-head label { flex: 1; }
.ds-pick { display: flex; align-items: center; gap: 6px; padding: 0 16px; }
.combo { flex: 1; display: flex; height: 26px; background: #fff; border: 1px solid #ccc; border-radius: 2px; }
.combo select { flex: 1; appearance: none; padding-left: 8px; outline: 0; }
.ds-tabs { display: flex; height: 27px; border-bottom: 1px solid #e8e8e8; }
.ds-tab { width: 116px; border-bottom: 3px solid #25b556; padding-top: 6px; }
.ds-search { display: flex; align-items: center; gap: 10px; padding: 8px 18px 1px 16px; }
.search { flex: 1; display: flex; align-items: center; gap: 5px; height: 26px; padding: 0 8px; background: #fff; border: 1px solid #ccc; border-radius: 2px; }
.search input { flex: 1; min-width: 0; outline: 0; }
.search input::placeholder { color: #888; }
.tree-wrap { flex: 1; display: flex; min-height: 0; margin-bottom: 3px; }
.tree { flex: 1; overflow: hidden; padding-top: 9px; }
.tree li { display: flex; align-items: center; gap: 6px; height: 30px; padding-left: 36px; }
.tree .group { padding-left: 16px; }
.abc { width: 16px; font: 700 9px/12px "Liberation Sans", sans-serif; color: #2e8540; }

/* scrollbars */
.vbar { width: 8px; padding: 0 1px; background: #ededed; border-radius: 4px; flex: none; }
.hbar { height: 8px; padding: 1px 0; background: #ededed; border-radius: 4px; }
.thumb { background: #b8b8b8; border-radius: 3px; }
.thumb-tree { height: 67%; }
.thumb-stage { height: 53%; margin-top: 145px; }
.thumb-wide { height: 6px; width: 57%; margin-left: 1px; }
.thumb-settings { height: 90%; margin-top: 52px; }

/* editor */
.editor { flex: 1; min-width: 0; display: flex; flex-direction: column; border-left: 1px solid #ccc; background: #fff; }
.ed-head { flex: none; display: flex; align-items: flex-end; height: 32px; padding: 0 8px 2px 5px; background: #f4f4f4; border-bottom: 1px solid #ccc; }
.ed-sub { color: #888; margin-left: 10px; font-family: "Noto Sans", "Noto Sans CJK SC", sans-serif; }
.ed-head .icon-btn { height: 18px; margin-left: 14px; }
.binding { flex: none; display: flex; background: #f4f4f4; border-bottom: 1px solid #ccc; padding: 3px 5px 0 0; }
.bind-label { width: 90px; padding: 3px 10px 0 0; text-align: right; }
.shelves { flex: 1; display: grid; gap: 3px; }
.shelf { height: 24px; display: flex; align-items: center; justify-content: flex-end; padding: 0 2px 0 5px; background: #fbfbfb; border-radius: 2px; }
.shelf-on { background: #fff; justify-content: space-between; }
.pill { display: flex; align-items: center; width: 150px; height: 20px; padding: 0 9px 0 4px; background: #ccc; border-radius: 2px; }
.pill select { flex: 1; appearance: none; outline: 0; }
.stage { flex: 1; min-height: 0; display: grid; grid-template-columns: 1fr 8px; grid-template-rows: 1fr 8px; }
.viewport { overflow: hidden; min-width: 0; min-height: 0; }
.board { background: #e9f1f5; padding: 0 0 23px 10px; display: grid; gap: 8px; }
.board-row { display: flex; gap: 8px; min-width: 0; }
.card { background: #fff; border-radius: 10px; }
.board-row .card { border-top-left-radius: 0; border-top-right-radius: 0; }
.card-cities { width: 197px; flex: none; padding: 3px 0 18px; }
.card-map { flex: 1; min-width: 0; overflow: hidden; border-bottom-right-radius: 0; }
.cities { display: grid; grid-auto-rows: 1fr; height: 178px; line-height: 17px; }
.cities li { display: flex; align-items: center; gap: 8px; padding-left: 36px; }
.cities i { height: 10px; background: linear-gradient(90deg, #35c8f8, #8d98fb); }
.map-text text { fill: #1c2c66; font-size: 12px; }
.card-charts { display: flex; height: 211px; overflow: hidden; border-top-right-radius: 0; border-bottom-right-radius: 0; }
.fig { margin: 0; flex: none; }
.fig figcaption { padding-left: 12px; font-size: 13px; line-height: 18px; color: #111; }
.fig-bars { padding-top: 8px; }
.fig-bars figcaption { padding-left: 34px; }
.fig-scatter { padding-top: 12px; }
.fig-gauge { padding-top: 14px; position: relative; }
.axis { font: 400 12px "Liberation Sans", sans-serif; fill: #666; }
.legend { font-size: 12px; fill: #333; }
.axis-soft { font-family: "Noto Sans", sans-serif; fill: #8f8fb3; }
.gauge-value { font: 400 24px "Noto Sans", "Noto Sans CJK SC", sans-serif; font-weight: 300; fill: #aaa; }
.quick { position: absolute; left: 79px; top: 34px; display: flex; gap: 10px; }
.quick button { width: 20px; height: 20px; display: flex; align-items: center; justify-content: center; background: #fff; border-radius: 3px; box-shadow: 0 0 3px #bbb; }

/* settings panel */
.settings { width: 201px; flex: none; display: flex; flex-direction: column; background: #f4f4f4; border-left: 1px solid #ccc; }
.set-head { flex: none; height: 50px; display: flex; align-items: center; justify-content: space-between; padding: 0 20px 8px 15px; }
.set-head h2 { margin: 0; font-size: 12px; font-weight: 400; }
.set-head .icon-btn { padding-top: 4px; }
.set-wrap { flex: 1; display: flex; min-height: 0; }
.set-list { flex: 1; overflow: hidden; }
.scrolled { margin-top: -15px; }
.sec { display: flex; align-items: center; gap: 5px; width: 100%; height: 39px; padding-left: 10px; border-bottom: 1px solid #d9d9d9; text-align: left; }
.sec svg { color: #888; }
.sec-title { border-bottom: 0; height: 38px; }
.sec-gear { padding-left: 14px; gap: 9px; }
.sec-open { padding-bottom: 9px; border-bottom: 1px solid #d9d9d9; }
.field { display: flex; align-items: center; gap: 10px; height: 36px; padding: 0 7px 0 15px; }
.field label { flex: 1; white-space: nowrap; }
.field input { width: 81px; height: 26px; padding: 0 8px 2px; border: 1px solid #ccc; border-radius: 2px; background: #fff; }
.hint { margin: 0; padding: 0 15px; font-size: 10px; line-height: 34px; color: #555; }
.swatch { width: 26px; height: 26px; flex: none; display: flex; justify-content: flex-end; align-items: flex-end; padding: 2px; border: 1px solid #ccc; border-radius: 2px; }
.swatch i { width: 8px; height: 8px; background: rgba(0, 0, 0, .4); clip-path: polygon(100% 0, 100% 100%, 0 100%); }
.swatch-mix { background: linear-gradient(90deg, #1cd0ff, #b47ae2) content-box, #fff; }
.swatch-red { background: linear-gradient(#ff2218, #ff2218) content-box, #fff; }
.swatch-yellow { background: linear-gradient(#ffcc1a, #ffcc1a) content-box, #fff; }
.swatch-mint { background: linear-gradient(#4af4d4, #4af4d4) content-box, #fff; }
.check { display: flex; align-items: center; gap: 6px; padding: 4px 15px 0; }
.check input { appearance: none; width: 14px; height: 14px; border-radius: 2px; background: #25b556; display: grid; place-items: center; }
.check input:checked::after { content: ""; width: 9px; height: 5px; margin-bottom: 2px; border: solid #fff; border-width: 0 0 2px 2px; transform: rotate(-45deg); }

.side { width: 40px; flex: none; background: #e2e2e4; }
.side-item { width: 100%; height: 50px; display: flex; flex-direction: column; align-items: center; justify-content: center; gap: 1px; }
.side-active { background: #f4f4f4; }

/* sheet tabs */
.sheets { flex: none; display: flex; height: 24px; background: #ededef; border-top: 1px solid #ccc; }
.sheet { display: flex; align-items: center; gap: 9px; padding: 0 9px 0 6px; border-right: 1px solid #ccc; }
.sheet:first-child { padding-left: 10px; }
.star { margin: -4px 0 0 -4px; }
.sheet-on { background: #fff; }
```
